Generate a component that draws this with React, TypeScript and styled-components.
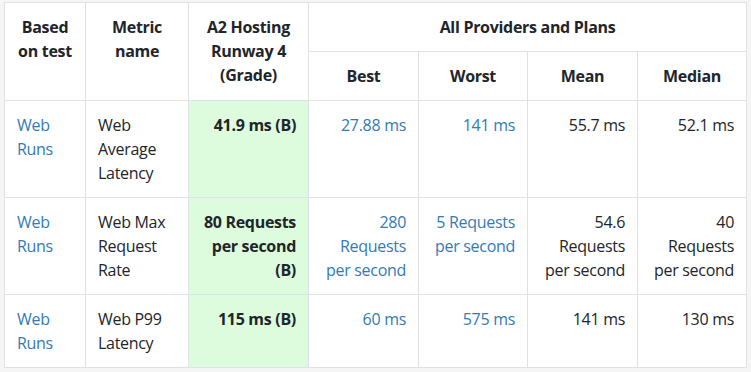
import React from "react";
import styled, { createGlobalStyle } from "styled-components";

const Global = createGlobalStyle`
  html, body {
    margin: 0;
    padding: 0;
    background: #f5f5f5;
  }
  body {
    font-family: "Open Sans", "Noto Sans", "Liberation Sans", sans-serif;
    font-size: 16px;
    line-height: 24px;
    letter-spacing: -0.3px;
    color: #212529;
  }
`;

const Wrap = styled.div`
  padding: 2px 0 0 4px;
`;

const Table = styled.table`
  border-collapse: collapse;
  table-layout: fixed;
  width: 743px;
  background: #fff;
  border: 1px solid #dee2e6;
`;

const Th = styled.th`
  border: 1px solid #dee2e6;
  padding: 12px;
  font-weight: 700;
  text-align: center;
  vertical-align: top;
`;

const Td = styled.td<{ $align?: "left" | "right"; $grade?: boolean }>`
  border: 1px solid #dee2e6;
  padding: 12px;
  text-align: ${(p) => p.$align ?? "right"};
  vertical-align: top;
  font-weight: ${(p) => (p.$grade ? 700 : 400)};
  background: ${(p) => (p.$grade ? "#ddfcdd" : "transparent")};
`;

const Link = styled.a`
  color: #337ab7;
  text-decoration: none;
`;

type Row = {
  metric: string;
  grade: string;
  best: string;
  worst: string;
  mean: string;
  median: string;
};

const rows: Row[] = [
  {
    metric: "Web Average Latency",
    grade: "41.9 ms (B)",
    best: "27.88 ms",
    worst: "141 ms",
    mean: "55.7 ms",
    median: "52.1 ms",
  },
  {
    metric: "Web Max Request Rate",
    grade: "80 Requests per second (B)",
    best: "280 Requests per second",
    worst: "5 Requests per second",
    mean: "54.6 Requests per second",
    median: "40 Requests per second",
  },
  {
    metric: "Web P99 Latency",
    grade: "115 ms (B)",
    best: "60 ms",
    worst: "575 ms",
    mean: "141 ms",
    median: "130 ms",
  },
];

const widths = [81, 103, 120, 110, 109, 110, 109];

export default function App() {
  return (
    <>
      <Global />
      <Wrap>
        <Table>
          <colgroup>
            {widths.map((w, i) => (
              <col key={i} style={{ width: w }} />
            ))}
          </colgroup>
          <thead>
            <tr>
              <Th rowSpan={2}>Based on test</Th>
              <Th rowSpan={2}>Metric name</Th>
              <Th rowSpan={2}>A2 Hosting Runway 4 (Grade)</Th>
              <Th colSpan={4}>All Providers and Plans</Th>
            </tr>
            <tr>
              <Th>Best</Th>
              <Th>Worst</Th>
              <Th>Mean</Th>
              <Th>Median</Th>
            </tr>
          </thead>
          <tbody>
            {rows.map((r) => (
              <tr key={r.metric}>
                <Td $align="left">
                  <Link href="#">Web Runs</Link>
                </Td>
                <Td $align="left">{r.metric}</Td>
                <Td $grade>{r.grade}</Td>
                <Td>
                  <Link href="#">{r.best}</Link>
                </Td>
                <Td>
                  <Link href="#">{r.worst}</Link>
                </Td>
                <Td>{r.mean}</Td>
                <Td>{r.median}</Td>
              </tr>
            ))}
          </tbody>
        </Table>
      </Wrap>
    </>
  );
}
